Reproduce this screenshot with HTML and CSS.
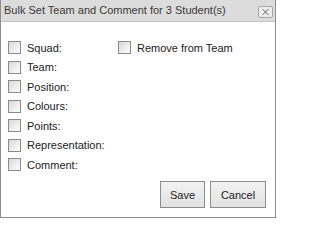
FILE: index.html
```html
<!DOCTYPE html>
<html>
<head>
<meta charset="utf-8">
<link rel="stylesheet" href="styles.css">
</head>
<body>
<div class="dialog">
  <div class="titlebar">
    <span class="title">Bulk Set Team and Comment for 3 Student(s)</span>
    <span class="close"><svg width="9" height="8" viewBox="0 0 9 8"><path d="M1.5 1 L7.5 7 M7.5 1 L1.5 7" stroke="#6a6a6a" stroke-width="1" fill="none"/></svg></span>
  </div>
  <div class="content">
    <div class="grid">
      <label class="opt"><input type="checkbox"><span>Squad:</span></label>
      <label class="opt"><input type="checkbox"><span>Remove from Team</span></label>
      <label class="opt"><input type="checkbox"><span>Team:</span></label>
      <span></span>
      <label class="opt"><input type="checkbox"><span>Position:</span></label>
      <span></span>
      <label class="opt"><input type="checkbox"><span>Colours:</span></label>
      <span></span>
      <label class="opt"><input type="checkbox"><span>Points:</span></label>
      <span></span>
      <label class="opt"><input type="checkbox"><span>Representation:</span></label>
      <span></span>
      <label class="opt"><input type="checkbox"><span>Comment:</span></label>
      <span></span>
    </div>
  </div>
  <div class="footer">
    <button class="btn save">Save</button>
    <button class="btn cancel">Cancel</button>
  </div>
</div>
</body>
</html>
```
FILE: styles.css
```css
html, body {
  margin: 0;
  padding: 0;
  background: #ffffff;
}
body {
  font-family: "Liberation Sans", Arial, sans-serif;
  font-size: 11px;
  color: #222;
}
.dialog {
  width: 276px;
  height: 218px;
  box-sizing: border-box;
  border: 1px solid #8c8c8c;
  border-top: none;
  display: flex;
  flex-direction: column;
  background: #fff;
}
.titlebar {
  height: 22px;
  box-sizing: border-box;
  background: #dcdcdc;
  border-bottom: 1px solid #c4c4c4;
  display: flex;
  align-items: center;
  justify-content: space-between;
  padding: 0 2px 0 3px;
}
.title {
  color: #3a3a3a;
  font-size: 11px;
  line-height: 13px;
}
.close {
  width: 15px;
  height: 12px;
  box-sizing: border-box;
  border: 1px solid #a6a6a6;
  border-radius: 2px;
  background: #ececec;
  display: flex;
  align-items: center;
  justify-content: center;
  margin-top: 2px;
}
.close svg {
  display: block;
}
.content {
  flex: 1;
  padding: 16px 0 0 7px;
}
.grid {
  display: grid;
  grid-template-columns: 110px auto;
  grid-auto-rows: 19.5px;
}
.opt {
  display: flex;
  align-items: center;
  gap: 6px;
  color: #222;
}
.opt input {
  -webkit-appearance: none;
  appearance: none;
  margin: 0;
  width: 13px;
  height: 13px;
  box-sizing: border-box;
  border: 1px solid #8a8a8a;
  background: linear-gradient(135deg, #d8d8d8 0%, #f0f0f0 60%, #fbfbfb 100%);
  flex: none;
}
.footer {
  display: flex;
  justify-content: flex-end;
  gap: 5px;
  padding: 0 9px 9px 0;
}
.btn {
  font-family: "Liberation Sans", Arial, sans-serif;
  font-size: 11px;
  color: #222;
  height: 27px;
  border: 1px solid #8c8c8c;
  border-radius: 0;
  background: linear-gradient(#f2f2f2, #e2e2e2);
  padding: 0 9px;
  margin: 0;
}
.save {
  width: 45px;
}
.cancel {
  width: 56px;
}
```
